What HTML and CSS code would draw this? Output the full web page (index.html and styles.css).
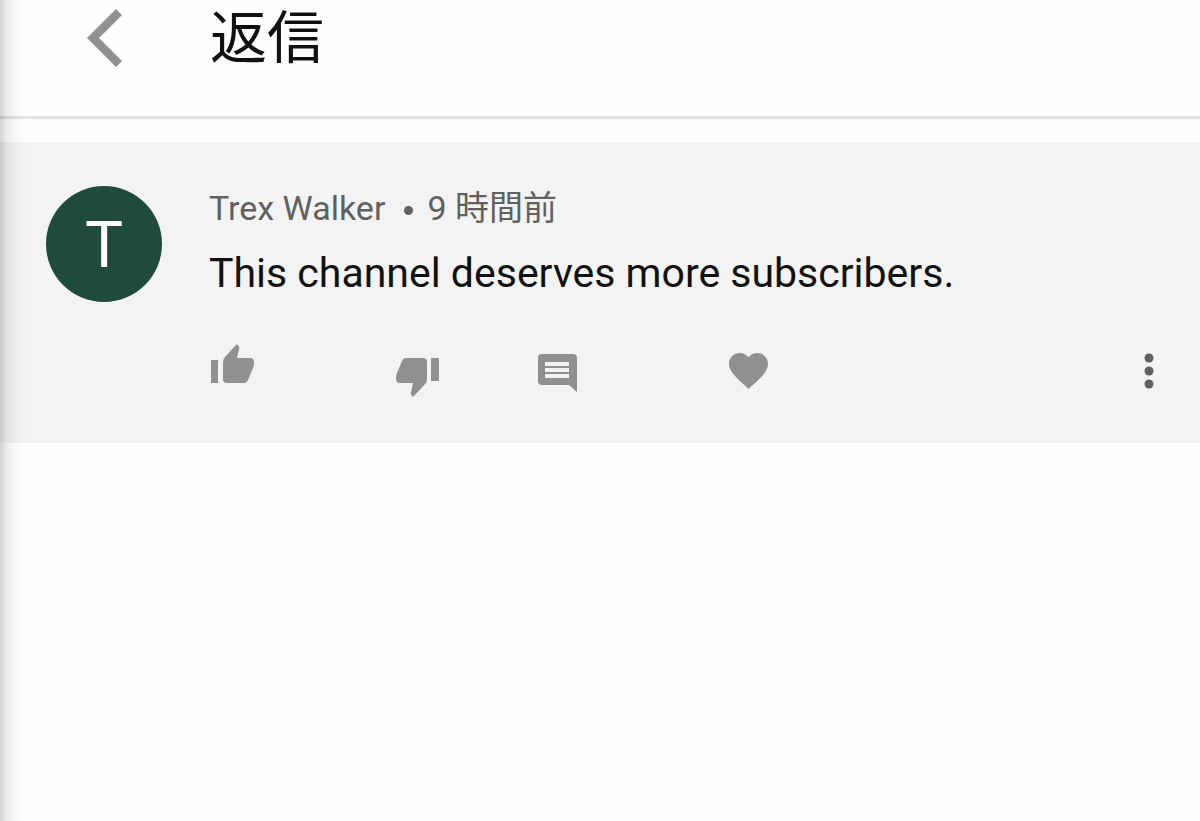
FILE: index.html
```html
<!DOCTYPE html>
<html lang="ja">
<head>
<meta charset="utf-8">
<meta name="viewport" content="width=device-width, initial-scale=1">
<title>返信</title>
<link rel="stylesheet" href="styles.css">
</head>
<body>
<header class="header">
  <button class="icon-button back" type="button" aria-label="戻る">
    <svg width="36" height="58" viewBox="0 0 36 58"><path d="M29 0L0 29L29 58L35 52L12 29L35 6Z"/></svg>
  </button>
  <h1 class="title">返信</h1>
</header>
<main>
  <article class="comment">
    <div class="avatar">T</div>
    <div class="body">
      <p class="meta"><span>Trex Walker</span><span class="dot"></span><span>9 時間前</span></p>
      <p class="message">This channel deserves more subscribers.</p>
      <div class="actions">
        <button class="icon-button like" type="button" aria-label="高く評価">
          <svg width="44" height="40" viewBox="0 0 44 40"><path d="M0 16h7v23H0zM12 18Q12 15 14 13L25 1Q26 0 27 1L28 3Q29 4 28 5L26 14H39Q43 14 43 18Q43 22 42 24L37 36Q36 39 33 39H16Q12 39 12 35Z"/></svg>
        </button>
        <button class="icon-button dislike" type="button" aria-label="低く評価">
          <svg width="44" height="40" viewBox="0 0 44 40"><path d="M43 23h-8V0h8zM31 21Q31 24 29 26L18 38Q17 39 16 38L15 36Q14 35 15 34L17 25H4Q0 25 0 21Q0 17 1 15L6 3Q7 0 10 0H27Q31 0 31 4Z"/></svg>
        </button>
        <button class="icon-button reply" type="button" aria-label="返信">
          <svg width="39" height="39" viewBox="0 0 39 39"><path d="M4 0H35Q39 0 39 4V38L31 31H4Q0 31 0 27V4Q0 0 4 0Z"/><path class="lines" d="M7 8h24v4H7zM7 14h24v4H7zM7 20h24v4H7z"/></svg>
        </button>
        <button class="icon-button heart" type="button" aria-label="ハート">
          <svg width="39" height="36" viewBox="2 3 20 18.350"><path d="M12 21.350l-1.450-1.320C5.400 15.360 2 12.280 2 8.500 2 5.420 4.420 3 7.500 3c1.740 0 3.410.81 4.500 2.090C13.090 3.810 14.760 3 16.500 3 19.580 3 22 5.420 22 8.500c0 3.780-3.400 6.860-8.550 11.540L12 21.350z"/></svg>
        </button>
        <button class="icon-button more" type="button" aria-label="その他">
          <svg width="10" height="36" viewBox="0 0 10 36"><circle cx="5" cy="5" r="4.500"/><circle cx="5" cy="18" r="4.500"/><circle cx="5" cy="31" r="4.500"/></svg>
        </button>
      </div>
    </div>
  </article>
</main>
</body>
</html>
```
FILE: styles.css
```css
* {
  box-sizing: border-box;
}

body {
  margin: 0;
  min-height: 100vh;
  background: #fefefe;
  color: #111;
  font-family: Roboto, "Noto Sans CJK JP", sans-serif;
}

/* Soft shadow cast along the left edge of the panel */
body::before {
  content: "";
  position: fixed;
  top: 0;
  bottom: 0;
  left: 0;
  width: 28px;
  background: linear-gradient(to right, rgba(0, 0, 0, 0.17), rgba(0, 0, 0, 0.07) 25%, rgba(0, 0, 0, 0.02) 60%, transparent);
  pointer-events: none;
}

.header {
  display: flex;
  align-items: flex-start;
  padding: 0 24px 38px 87px;
  border-bottom: 3px solid #e2e2e2;
}

.icon-button {
  display: block;
  padding: 0;
  border: 0;
  background: none;
  color: #909090;
  cursor: pointer;
}

.icon-button svg {
  display: block;
  fill: currentColor;
}

.back {
  margin-top: 9px;
}

.title {
  margin: 0 0 0 87px;
  font-size: 57px;
  font-weight: 400;
  line-height: 78px;
}

.comment {
  display: flex;
  gap: 47px;
  margin-top: 23px;
  padding: 44px 46px 42px;
  background: #f3f3f3;
}

.avatar {
  flex: none;
  width: 116px;
  height: 116px;
  border-radius: 50%;
  background: #1f4b3f;
  color: #fff;
  font-size: 64px;
  line-height: 120px;
  text-align: center;
}

.body {
  flex: 1;
}

.meta {
  display: flex;
  align-items: center;
  margin: 0;
  color: #606060;
  font-size: 34px;
  line-height: 44px;
}

.dot {
  width: 9px;
  height: 9px;
  margin: 4px 14px 0 19px;
  border-radius: 50%;
  background: currentColor;
}

.message {
  margin: 19px 0 0;
  font-size: 41px;
  line-height: 48px;
}

.actions {
  display: flex;
  align-items: center;
  margin-top: 44px;
  height: 60px;
}

.like {
  margin: 0 141px 14px 2px;
}

.dislike {
  margin: 14px 98px 0 0;
}

.reply {
  margin: 4px 152px 0 0;
}

.more {
  margin-left: auto;
  color: #606060;
}

.lines {
  fill: #f3f3f3;
}
```
